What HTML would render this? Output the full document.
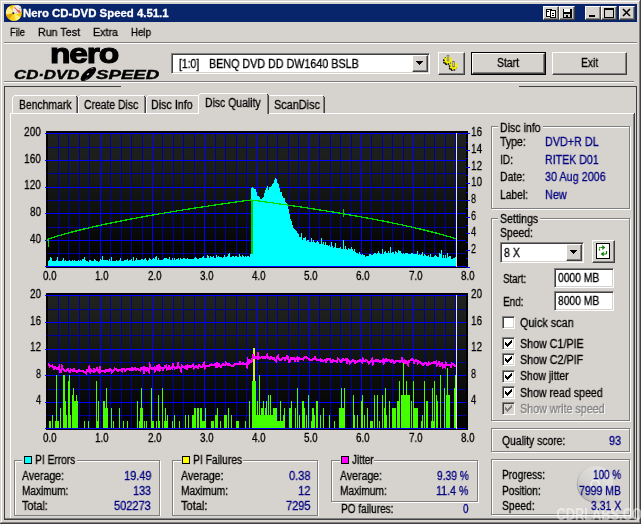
<!DOCTYPE html>
<html><head><meta charset="utf-8"><title>Nero CD-DVD Speed 4.51.1</title><style>
html,body{margin:0;padding:0;overflow:hidden}
body{width:641px;height:524px;background:#d6d3ce;position:relative;overflow:hidden;font-family:"Liberation Sans",sans-serif;font-size:12px;color:#000}
.a{position:absolute}
.t{position:absolute;white-space:pre;transform-origin:0 0;line-height:14px;will-change:transform;-webkit-text-stroke:0.3px}
.l{position:absolute;background:#808080}
.w{position:absolute;background:#fff}
.k{position:absolute;background:#404040}
.btn{position:absolute;background:#d6d3ce;box-sizing:border-box;border:1px solid;border-color:#fff #404040 #404040 #fff;box-shadow:inset -1px -1px 0 #808080}
.sunk{position:absolute;background:#fff;box-sizing:border-box;border:1px solid;border-color:#808080 #fff #fff #808080;box-shadow:inset 1px 1px 0 #404040, inset -1px -1px 0 #d6d3ce}
.grp{position:absolute;box-sizing:border-box;border:1px solid #808080;box-shadow:1px 1px 0 #fff, inset 1px 1px 0 #fff}
.cap{position:absolute;background:#d6d3ce}
.cb{position:absolute;width:13px;height:13px;background:#fff;box-sizing:border-box;border:1px solid;border-color:#808080 #fff #fff #808080;box-shadow:inset 1px 1px 0 #404040, inset -1px -1px 0 #d6d3ce}
.sq{position:absolute;width:8px;height:8px;box-sizing:border-box;border:1px solid #000}
</style></head><body>
<div class="w" style="left:1px;top:1px;width:638px;height:1px;"></div>
<div class="w" style="left:1px;top:1px;width:1px;height:521px;"></div>
<div class="l" style="left:639px;top:1px;width:1px;height:522px;"></div>
<div class="k" style="left:640px;top:0px;width:1px;height:524px;"></div>
<div class="l" style="left:1px;top:522px;width:639px;height:1px;"></div>
<div class="k" style="left:0px;top:523px;width:641px;height:1px;"></div>
<div class="a" style="left:4px;top:4px;width:633px;height:18px;background:#08246b"></div>
<svg class="a" style="left:5px;top:4px" width="18" height="18" viewBox="0 0 18 18">
<circle cx="8.9" cy="8.9" r="8" fill="#f8c800"/>
<path d="M8.9,8.9 L1,10.2 A8,8 0 0 1 4.2,2.4Z" fill="#fff08a"/>
<path d="M8.9,8.9 L15.6,13.2 A8,8 0 0 1 10.5,16.7Z" fill="#fff27a"/>
<path d="M8.9,8.9 L4.6,15.6 A8,8 0 0 1 1.3,11.2Z" fill="#e8a400"/>
<path d="M8.9,8.9 L10.5,16.7 A8,8 0 0 1 4.6,15.6Z" fill="#ffd21c"/>
<circle cx="8.4" cy="9.1" r="1.1" fill="#08246b"/>
<circle cx="12.1" cy="5.4" r="4.5" fill="#ececec"/>
<path d="M9,3.2 L11,4.6 L15.6,9.2 L13.4,8.6 Z" fill="#e83010"/>
<path d="M12.5,6.2 L16,9 L14.5,6.2Z" fill="#f04020"/>
<circle cx="9.9" cy="3.6" r="0.6" fill="#f06040"/><circle cx="14.9" cy="4.6" r="0.6" fill="#f06040"/><circle cx="11.5" cy="8.4" r="0.5" fill="#f0a090"/>
</svg>
<div class="btn" style="left:543px;top:6px;width:16px;height:14px"><svg class="a" style="left:0;top:0" width="14" height="12" viewBox="0 0 14 12" shape-rendering="crispEdges"><rect x="2" y="2" width="5" height="7" fill="#fff" stroke="#000"/><rect x="6.5" y="3.5" width="5" height="7" fill="#fff" stroke="#000"/><rect x="3" y="4" width="2" height="1" fill="#000"/><rect x="8" y="6" width="2" height="1" fill="#000"/><rect x="8" y="8" width="2" height="1" fill="#000"/></svg></div>
<div class="btn" style="left:559px;top:6px;width:16px;height:14px"><svg class="a" style="left:0;top:0" width="14" height="12" viewBox="0 0 14 12" shape-rendering="crispEdges"><rect x="2.5" y="1.5" width="9" height="9" fill="#000"/><rect x="4" y="2" width="6" height="3" fill="#fff"/><rect x="4" y="7" width="6" height="3" fill="#d6d3ce"/><rect x="6" y="8" width="2" height="2" fill="#000"/></svg></div>
<div class="btn" style="left:585px;top:6px;width:16px;height:14px"><svg class="a" style="left:0;top:0" width="14" height="12" viewBox="0 0 14 12" shape-rendering="crispEdges"><rect x="3" y="8" width="6" height="2" fill="#000"/></svg></div>
<div class="btn" style="left:601px;top:6px;width:16px;height:14px"><svg class="a" style="left:0;top:0" width="14" height="12" viewBox="0 0 14 12" shape-rendering="crispEdges"><rect x="2" y="1" width="9" height="9" fill="none" stroke="#000" stroke-width="1" transform="translate(0.5,0.5)"/><rect x="2" y="1" width="10" height="2" fill="#000"/></svg></div>
<div class="btn" style="left:619px;top:6px;width:16px;height:14px"><svg class="a" style="left:0;top:0" width="14" height="12" viewBox="0 0 14 12" shape-rendering="crispEdges"><path d="M3,2 L10,9 M10,2 L3,9" stroke="#000" stroke-width="1.6" shape-rendering="auto"/></svg></div>
<div class="l" style="left:4px;top:42px;width:633px;height:1px;"></div>
<div class="w" style="left:4px;top:43px;width:633px;height:1px;"></div>
<div class="a" id="nero" style="left:50px;top:38px;font-weight:bold;font-size:28px;line-height:32px;letter-spacing:-1px;-webkit-text-stroke:1.1px #000;white-space:pre;transform-origin:0 0;will-change:transform;transform:scaleX(1.2)">nero</div>
<div class="a" id="cddvd" style="left:14px;top:68px;font-weight:bold;font-style:italic;font-size:12px;line-height:14px;white-space:pre;-webkit-text-stroke:0.4px #000;transform-origin:0 0;will-change:transform;transform:scaleX(1.4)">CD·DVD</div>
<div class="a" id="speed" style="left:96.2px;top:68px;font-weight:bold;font-style:italic;font-size:12px;line-height:14px;white-space:pre;-webkit-text-stroke:0.4px #000;transform-origin:0 0;will-change:transform;transform:scaleX(1.555)">SPEED</div>
<svg class="a" style="left:78px;top:64px" width="22" height="20" viewBox="0 0 22 20"><g transform="translate(10.4,10.1) rotate(-41)"><ellipse rx="9.6" ry="4.1" fill="#000"/><ellipse cx="-0.3" cy="-0.2" rx="1.5" ry="0.7" fill="#d6d3ce"/><path d="M5.2,-2.2 Q6.6,-2 7.6,-1" stroke="#d6d3ce" stroke-width="0.5" fill="none"/><path d="M-7,2 Q-5,2.6 -3,2.4" stroke="#d6d3ce" stroke-width="0.4" fill="none"/></g></svg>
<div class="sunk" style="left:171px;top:53px;width:259px;height:21px;"></div>
<div class="btn" style="left:412px;top:55px;width:16px;height:17px"><svg class="a" style="left:3px;top:5px" width="8" height="5" shape-rendering="crispEdges"><path d="M0,0H7L3.5,4Z" fill="#000"/><rect x="0" y="0" width="7" height="1"/><rect x="1" y="1" width="5" height="1"/><rect x="2" y="2" width="3" height="1"/><rect x="3" y="3" width="1" height="1"/></svg></div>
<div class="btn" style="left:438px;top:52px;width:27px;height:23px;"></div>
<svg class="a" style="left:440px;top:53px" width="24" height="21" viewBox="0 0 24 21">
<g transform="translate(8,7)"><circle r="3.3" fill="#000" transform="translate(-1,1.1)" stroke="#000" stroke-width="1.6" stroke-dasharray="1.5 1.09"/><circle r="3.3" fill="#f8f000" stroke="#f8f000" stroke-width="1.6" stroke-dasharray="1.5 1.09"/><rect x="-0.9" y="-4.6" width="1.8" height="5.6" fill="#c8c8d8" stroke="#505060" stroke-width="0.5"/></g>
<g transform="translate(13.7,12.9)"><circle r="3.3" fill="#000" transform="translate(-1,1.1)" stroke="#000" stroke-width="1.6" stroke-dasharray="1.5 1.09"/><circle r="3.3" fill="#f8f000" stroke="#f8f000" stroke-width="1.6" stroke-dasharray="1.5 1.09"/><rect x="-0.9" y="-4.6" width="1.8" height="5.6" fill="#c8c8d8" stroke="#505060" stroke-width="0.5"/></g>
</svg>
<div class="a" style="left:471px;top:52px;width:75px;height:23px;background:#000"></div>
<div class="btn" style="left:472px;top:53px;width:73px;height:21px;"></div>
<div class="btn" style="left:552px;top:52px;width:75px;height:23px;"></div>
<div class="l" style="left:4px;top:81px;width:630px;height:1px;"></div>
<div class="w" style="left:4px;top:82px;width:630px;height:1px;"></div>
<div class="k" style="left:4px;top:86px;width:117px;height:1px;"></div>
<div class="k" style="left:519px;top:86px;width:118px;height:1px;"></div>
<div class="k" style="left:4px;top:86px;width:1px;height:434px;"></div>
<div class="k" style="left:636px;top:86px;width:1px;height:434px;"></div>
<div class="w" style="left:10px;top:113px;width:624px;height:1px;"></div>
<div class="w" style="left:10px;top:113px;width:1px;height:406px;"></div>
<div class="l" style="left:633px;top:114px;width:1px;height:405px;"></div>
<div class="k" style="left:634px;top:113px;width:1px;height:407px;"></div>
<div class="l" style="left:5px;top:518px;width:631px;height:1px;"></div>
<div class="k" style="left:4px;top:519px;width:633px;height:1px;"></div>
<div class="a" style="left:12px;top:95px;width:66px;height:18px;background:#d6d3ce"></div><div class="w" style="left:12px;top:97px;width:1px;height:16px;"></div><div class="w" style="left:14px;top:95px;width:62px;height:1px;"></div><div class="w" style="left:13px;top:96px;width:1px;height:1px;"></div><div class="l" style="left:76px;top:97px;width:1px;height:16px;"></div><div class="k" style="left:77px;top:97px;width:1px;height:16px;"></div><div class="k" style="left:76px;top:96px;width:1px;height:1px;"></div>
<div class="a" style="left:78px;top:95px;width:68px;height:18px;background:#d6d3ce"></div><div class="w" style="left:78px;top:97px;width:1px;height:16px;"></div><div class="w" style="left:80px;top:95px;width:64px;height:1px;"></div><div class="w" style="left:79px;top:96px;width:1px;height:1px;"></div><div class="l" style="left:144px;top:97px;width:1px;height:16px;"></div><div class="k" style="left:145px;top:97px;width:1px;height:16px;"></div><div class="k" style="left:144px;top:96px;width:1px;height:1px;"></div>
<div class="a" style="left:146px;top:95px;width:54px;height:18px;background:#d6d3ce"></div><div class="w" style="left:146px;top:97px;width:1px;height:16px;"></div><div class="w" style="left:148px;top:95px;width:50px;height:1px;"></div><div class="w" style="left:147px;top:96px;width:1px;height:1px;"></div><div class="l" style="left:198px;top:97px;width:1px;height:16px;"></div><div class="k" style="left:199px;top:97px;width:1px;height:16px;"></div><div class="k" style="left:198px;top:96px;width:1px;height:1px;"></div>
<div class="a" style="left:267px;top:95px;width:58px;height:18px;background:#d6d3ce"></div><div class="w" style="left:267px;top:97px;width:1px;height:16px;"></div><div class="w" style="left:269px;top:95px;width:54px;height:1px;"></div><div class="w" style="left:268px;top:96px;width:1px;height:1px;"></div><div class="l" style="left:323px;top:97px;width:1px;height:16px;"></div><div class="k" style="left:324px;top:97px;width:1px;height:16px;"></div><div class="k" style="left:323px;top:96px;width:1px;height:1px;"></div>
<div class="a" style="left:198px;top:93px;width:71px;height:21px;background:#d6d3ce"></div><div class="w" style="left:198px;top:95px;width:1px;height:19px;"></div><div class="w" style="left:200px;top:93px;width:67px;height:1px;"></div><div class="w" style="left:199px;top:94px;width:1px;height:1px;"></div><div class="l" style="left:267px;top:95px;width:1px;height:19px;"></div><div class="k" style="left:268px;top:95px;width:1px;height:19px;"></div><div class="k" style="left:267px;top:94px;width:1px;height:1px;"></div>
<div class="grp" style="left:491px;top:126px;width:139px;height:83px"></div><div class="cap" style="left:498px;top:126px;width:45px;height:2px;"></div>
<div class="grp" style="left:491px;top:218px;width:139px;height:203px"></div><div class="cap" style="left:498px;top:218px;width:42px;height:2px;"></div>
<div class="grp" style="left:491px;top:428px;width:139px;height:24px"></div>
<div class="grp" style="left:491px;top:459px;width:139px;height:56px"></div>
<div class="grp" style="left:14px;top:460px;width:146px;height:56px"></div><div class="cap" style="left:22px;top:460px;width:55px;height:2px;"></div>
<div class="cap" style="left:14px;top:516px;width:147px;height:1px;"></div>
<div class="grp" style="left:172px;top:460px;width:146px;height:56px"></div><div class="cap" style="left:181px;top:460px;width:62px;height:2px;"></div>
<div class="cap" style="left:172px;top:516px;width:147px;height:1px;"></div>
<div class="grp" style="left:331px;top:460px;width:147px;height:42px"></div><div class="cap" style="left:340px;top:460px;width:34px;height:2px;"></div>
<div class="sq" style="left:24px;top:456px;background:#00ffff"></div>
<div class="sq" style="left:182px;top:456px;background:#ffff00"></div>
<div class="sq" style="left:341px;top:456px;background:#ff00ff"></div>
<div class="sunk" style="left:500px;top:242px;width:84px;height:21px;"></div>
<div class="btn" style="left:566px;top:244px;width:16px;height:17px"><svg class="a" style="left:3px;top:5px" width="8" height="5" shape-rendering="crispEdges"><rect x="0" y="0" width="7" height="1"/><rect x="1" y="1" width="5" height="1"/><rect x="2" y="2" width="3" height="1"/><rect x="3" y="3" width="1" height="1"/></svg></div>
<div class="btn" style="left:592px;top:240px;width:23px;height:23px;"></div>
<svg class="a" style="left:596px;top:243px" width="14" height="16" viewBox="0 0 14 16"><rect x="0.5" y="0.5" width="13" height="15" fill="#fff" stroke="#000"/>
<path d="M3.5,7.5 V5.2 Q3.5,4.5 4.2,4.5 H7" stroke="#008000" stroke-width="1.2" fill="none" stroke-dasharray="1.6 0.5"/><path d="M6.3,2 L9.3,4.5 L6.3,7Z" fill="#008000"/>
<path d="M10.5,8 V10.3 Q10.5,11 9.8,11 H7" stroke="#008000" stroke-width="1.2" fill="none"/><path d="M7.7,8.5 L4.7,11 L7.7,13.5Z" fill="#008000"/></svg>
<div class="sunk" style="left:554px;top:268px;width:60px;height:20px;"></div>
<div class="sunk" style="left:554px;top:291px;width:60px;height:20px;"></div>
<div class="cb" style="left:502px;top:316px;"></div>
<div class="cb" style="left:502px;top:337px;"><svg class="a" style="left:2px;top:2px" width="7" height="7" shape-rendering="crispEdges"><path d="M0,2v3l2,2l5,-5v-3l-5,5z" fill="#000"/></svg></div>
<div class="cb" style="left:502px;top:353px;"><svg class="a" style="left:2px;top:2px" width="7" height="7" shape-rendering="crispEdges"><path d="M0,2v3l2,2l5,-5v-3l-5,5z" fill="#000"/></svg></div>
<div class="cb" style="left:502px;top:370px;"><svg class="a" style="left:2px;top:2px" width="7" height="7" shape-rendering="crispEdges"><path d="M0,2v3l2,2l5,-5v-3l-5,5z" fill="#000"/></svg></div>
<div class="cb" style="left:502px;top:386px;"><svg class="a" style="left:2px;top:2px" width="7" height="7" shape-rendering="crispEdges"><path d="M0,2v3l2,2l5,-5v-3l-5,5z" fill="#000"/></svg></div>
<div class="cb" style="left:502px;top:402px;background:#d6d3ce;"><svg class="a" style="left:2px;top:2px" width="7" height="7" shape-rendering="crispEdges"><path d="M0,2v3l2,2l5,-5v-3l-5,5z" fill="#808080"/></svg></div>
<svg class="a" style="left:551px;top:454px" width="90" height="70" viewBox="0 0 90 70"><defs><linearGradient id="wm" x1="0.1" y1="0.9" x2="0.9" y2="0.1"><stop offset="0" stop-color="#8c8c8c" stop-opacity="0.5"/><stop offset="0.35" stop-color="#d0d0d0" stop-opacity="0.4"/><stop offset="1" stop-color="#fff" stop-opacity="0.45"/></linearGradient></defs>
<linearGradient id="wr" x1="0.1" y1="0.9" x2="0.9" y2="0.1"><stop offset="0" stop-color="#808080" stop-opacity="0.7"/><stop offset="0.6" stop-color="#b0b0b0" stop-opacity="0.25"/><stop offset="1" stop-color="#fff" stop-opacity="0.3"/></linearGradient><circle cx="44.2" cy="30.2" r="18" fill="url(#wm)" stroke="url(#wr)" stroke-width="1"/><circle cx="44.2" cy="30.2" r="4" fill="none" stroke="#fff" stroke-opacity="0.6" stroke-width="1.6"/>
<text x="5.5" y="66" font-family="Liberation Sans, sans-serif" font-weight="bold" font-size="16.5" fill="#fff" fill-opacity="0.5" textLength="96" lengthAdjust="spacingAndGlyphs">CDRLABS.COM</text></svg>
<svg class="a" style="left:0;top:0" width="641" height="524" viewBox="0 0 641 524" shape-rendering="crispEdges"><rect x="46" y="131" width="422" height="137" fill="#000"/><defs><linearGradient id="g131" x1="0" y1="0" x2="0" y2="1"><stop offset="0" stop-color="#1f221f"/><stop offset="0.3" stop-color="#191c19"/><stop offset="0.6" stop-color="#0d0f0d"/><stop offset="1" stop-color="#000"/></linearGradient></defs><rect x="48" y="133" width="418" height="133" fill="url(#g131)"/><rect x="58" y="133" width="1" height="134" fill="#00009c"/><rect x="68" y="133" width="1" height="134" fill="#00009c"/><rect x="79" y="133" width="1" height="134" fill="#00009c"/><rect x="89" y="133" width="1" height="134" fill="#00009c"/><rect x="110" y="133" width="1" height="134" fill="#00009c"/><rect x="121" y="133" width="1" height="134" fill="#00009c"/><rect x="131" y="133" width="1" height="134" fill="#00009c"/><rect x="142" y="133" width="1" height="134" fill="#00009c"/><rect x="162" y="133" width="1" height="134" fill="#00009c"/><rect x="173" y="133" width="1" height="134" fill="#00009c"/><rect x="183" y="133" width="1" height="134" fill="#00009c"/><rect x="194" y="133" width="1" height="134" fill="#00009c"/><rect x="215" y="133" width="1" height="134" fill="#00009c"/><rect x="225" y="133" width="1" height="134" fill="#00009c"/><rect x="236" y="133" width="1" height="134" fill="#00009c"/><rect x="246" y="133" width="1" height="134" fill="#00009c"/><rect x="267" y="133" width="1" height="134" fill="#00009c"/><rect x="277" y="133" width="1" height="134" fill="#00009c"/><rect x="288" y="133" width="1" height="134" fill="#00009c"/><rect x="298" y="133" width="1" height="134" fill="#00009c"/><rect x="319" y="133" width="1" height="134" fill="#00009c"/><rect x="330" y="133" width="1" height="134" fill="#00009c"/><rect x="340" y="133" width="1" height="134" fill="#00009c"/><rect x="351" y="133" width="1" height="134" fill="#00009c"/><rect x="371" y="133" width="1" height="134" fill="#00009c"/><rect x="382" y="133" width="1" height="134" fill="#00009c"/><rect x="392" y="133" width="1" height="134" fill="#00009c"/><rect x="403" y="133" width="1" height="134" fill="#00009c"/><rect x="424" y="133" width="1" height="134" fill="#00009c"/><rect x="434" y="133" width="1" height="134" fill="#00009c"/><rect x="445" y="133" width="1" height="134" fill="#00009c"/><rect x="455" y="133" width="1" height="134" fill="#00009c"/><rect x="47" y="147" width="419" height="1" fill="#00009c"/><rect x="47" y="173" width="419" height="1" fill="#00009c"/><rect x="47" y="200" width="419" height="1" fill="#00009c"/><rect x="47" y="227" width="419" height="1" fill="#00009c"/><rect x="47" y="253" width="419" height="1" fill="#00009c"/><rect x="100" y="133" width="1" height="134" fill="#0000ff"/><rect x="152" y="133" width="1" height="134" fill="#0000ff"/><rect x="204" y="133" width="1" height="134" fill="#0000ff"/><rect x="257" y="133" width="1" height="134" fill="#0000ff"/><rect x="309" y="133" width="1" height="134" fill="#0000ff"/><rect x="361" y="133" width="1" height="134" fill="#0000ff"/><rect x="413" y="133" width="1" height="134" fill="#0000ff"/><rect x="45" y="133" width="421" height="1" fill="#0000ff"/><rect x="45" y="160" width="421" height="1" fill="#0000ff"/><rect x="45" y="187" width="421" height="1" fill="#0000ff"/><rect x="45" y="213" width="421" height="1" fill="#0000ff"/><rect x="45" y="240" width="421" height="1" fill="#0000ff"/><rect x="45" y="266" width="421" height="1" fill="#0000ff"/><rect x="466" y="133" width="4" height="1" fill="#0000ff"/><rect x="466" y="142" width="2" height="1" fill="#0000ff"/><rect x="466" y="150" width="4" height="1" fill="#0000ff"/><rect x="466" y="158" width="2" height="1" fill="#0000ff"/><rect x="466" y="167" width="4" height="1" fill="#0000ff"/><rect x="466" y="175" width="2" height="1" fill="#0000ff"/><rect x="466" y="183" width="4" height="1" fill="#0000ff"/><rect x="466" y="192" width="2" height="1" fill="#0000ff"/><rect x="466" y="200" width="4" height="1" fill="#0000ff"/><rect x="466" y="208" width="2" height="1" fill="#0000ff"/><rect x="466" y="217" width="4" height="1" fill="#0000ff"/><rect x="466" y="225" width="2" height="1" fill="#0000ff"/><rect x="466" y="233" width="4" height="1" fill="#0000ff"/><rect x="466" y="242" width="2" height="1" fill="#0000ff"/><rect x="466" y="250" width="4" height="1" fill="#0000ff"/><rect x="466" y="258" width="2" height="1" fill="#0000ff"/><rect x="466" y="267" width="4" height="1" fill="#0000ff"/><path d="M48,266L48,260.7L49,260.7L49,260.4L50,260.4L50,257.0L51,257.0L51,258.0L52,258.0L52,260.7L53,260.7L53,261.0L54,261.0L54,260.6L55,260.6L55,260.7L56,260.7L56,260.3L57,260.3L57,257.1L58,257.1L58,261.3L59,261.3L59,260.8L60,260.8L60,261.2L61,261.2L61,260.8L62,260.8L62,260.4L63,260.4L63,258.0L64,258.0L64,261.0L65,261.0L65,260.4L66,260.4L66,260.5L67,260.5L67,261.2L68,261.2L68,261.4L69,261.4L69,259.9L70,259.9L70,261.4L71,261.4L71,260.5L72,260.5L72,259.7L73,259.7L73,260.5L74,260.5L74,259.8L75,259.8L75,261.1L76,261.1L76,260.8L77,260.8L77,260.8L78,260.8L78,260.3L79,260.3L79,260.9L80,260.9L80,259.8L81,259.8L81,261.2L82,261.2L82,259.2L83,259.2L83,258.5L84,258.5L84,257.2L85,257.2L85,260.3L86,260.3L86,261.2L87,261.2L87,261.2L88,261.2L88,261.5L89,261.5L89,260.3L90,260.3L90,260.1L91,260.1L91,261.0L92,261.0L92,260.9L93,260.9L93,260.8L94,260.8L94,259.2L95,259.2L95,259.5L96,259.5L96,261.4L97,261.4L97,260.6L98,260.6L98,261.5L99,261.5L99,261.4L100,261.4L100,258.8L101,258.8L101,260.3L102,260.3L102,256.3L103,256.3L103,260.2L104,260.2L104,259.9L105,259.9L105,259.9L106,259.9L106,260.0L107,260.0L107,260.3L108,260.3L108,261.2L109,261.2L109,258.6L110,258.6L110,261.0L111,261.0L111,257.1L112,257.1L112,260.7L113,260.7L113,260.8L114,260.8L114,260.8L115,260.8L115,260.7L116,260.7L116,259.8L117,259.8L117,260.9L118,260.9L118,260.6L119,260.6L119,260.3L120,260.3L120,258.2L121,258.2L121,260.7L122,260.7L122,260.8L123,260.8L123,261.0L124,261.0L124,259.8L125,259.8L125,259.6L126,259.6L126,260.0L127,260.0L127,259.2L128,259.2L128,260.5L129,260.5L129,260.2L130,260.2L130,259.6L131,259.6L131,259.1L132,259.1L132,260.6L133,260.6L133,257.4L134,257.4L134,260.6L135,260.6L135,259.9L136,259.9L136,258.1L137,258.1L137,259.8L138,259.8L138,260.2L139,260.2L139,260.1L140,260.1L140,260.2L141,260.2L141,259.1L142,259.1L142,258.9L143,258.9L143,260.4L144,260.4L144,259.2L145,259.2L145,258.4L146,258.4L146,259.8L147,259.8L147,260.5L148,260.5L148,259.5L149,259.5L149,257.5L150,257.5L150,258.7L151,258.7L151,259.8L152,259.8L152,258.9L153,258.9L153,258.3L154,258.3L154,258.8L155,258.8L155,257.4L156,257.4L156,255.8L157,255.8L157,260.1L158,260.1L158,257.5L159,257.5L159,259.8L160,259.8L160,259.9L161,259.9L161,259.5L162,259.5L162,260.1L163,260.1L163,258.6L164,258.6L164,258.3L165,258.3L165,258.2L166,258.2L166,257.8L167,257.8L167,258.7L168,258.7L168,258.5L169,258.5L169,257.1L170,257.1L170,259.9L171,259.9L171,259.8L172,259.8L172,258.0L173,258.0L173,259.6L174,259.6L174,258.3L175,258.3L175,259.7L176,259.7L176,259.0L177,259.0L177,259.4L178,259.4L178,258.2L179,258.2L179,259.7L180,259.7L180,258.2L181,258.2L181,259.1L182,259.1L182,259.1L183,259.1L183,258.3L184,258.3L184,257.8L185,257.8L185,258.8L186,258.8L186,259.3L187,259.3L187,257.9L188,257.9L188,258.9L189,258.9L189,258.8L190,258.8L190,259.2L191,259.2L191,258.7L192,258.7L192,258.6L193,258.6L193,258.7L194,258.7L194,257.5L195,257.5L195,257.1L196,257.1L196,257.8L197,257.8L197,258.6L198,258.6L198,258.5L199,258.5L199,258.2L200,258.2L200,258.4L201,258.4L201,258.1L202,258.1L202,257.2L203,257.2L203,255.8L204,255.8L204,257.6L205,257.6L205,257.5L206,257.5L206,257.7L207,257.7L207,255.3L208,255.3L208,256.4L209,256.4L209,257.8L210,257.8L210,255.9L211,255.9L211,257.0L212,257.0L212,256.6L213,256.6L213,255.9L214,255.9L214,257.7L215,257.7L215,257.8L216,257.8L216,255.4L217,255.4L217,256.7L218,256.7L218,255.8L219,255.8L219,256.6L220,256.6L220,256.7L221,256.7L221,257.4L222,257.4L222,257.6L223,257.6L223,257.0L224,257.0L224,254.6L225,254.6L225,257.1L226,257.1L226,256.8L227,256.8L227,255.5L228,255.5L228,254.4L229,254.4L229,252.9L230,252.9L230,256.6L231,256.6L231,257.1L232,257.1L232,255.6L233,255.6L233,255.9L234,255.9L234,256.7L235,256.7L235,256.3L236,256.3L236,256.2L237,256.2L237,257.2L238,257.2L238,256.5L239,256.5L239,254.1L240,254.1L240,255.5L241,255.5L241,256.5L242,256.5L242,255.3L243,255.3L243,256.1L244,256.1L244,257.1L245,257.1L245,256.4L246,256.4L246,256.6L247,256.6L247,256.2L248,256.2L248,255.8L249,255.8L249,257.0L250,257.0L250,254.1L251,254.1L251,187.7L252,187.7L252,186.7L253,186.7L253,187.7L254,187.7L254,189.0L255,189.0L255,189.3L256,189.3L256,192.3L257,192.3L257,196.0L258,196.0L258,195.7L259,195.7L259,197.2L260,197.2L260,198.7L261,198.7L261,198.6L262,198.6L262,198.0L263,198.0L263,197.0L264,197.0L264,192.9L265,192.9L265,190.1L266,190.1L266,188.3L267,188.3L267,186.1L268,186.1L268,190.3L269,190.3L269,186.5L270,186.5L270,187.0L271,187.0L271,185.6L272,185.6L272,184.2L273,184.2L273,182.5L274,182.5L274,179.9L275,179.9L275,177.9L276,177.9L276,179.3L277,179.3L277,183.2L278,183.2L278,184.4L279,184.4L279,187.7L280,187.7L280,191.7L281,191.7L281,191.6L282,191.6L282,195.5L283,195.5L283,197.6L284,197.6L284,197.8L285,197.8L285,202.3L286,202.3L286,203.1L287,203.1L287,205.4L288,205.4L288,209.3L289,209.3L289,214.4L290,214.4L290,219.1L291,219.1L291,220.6L292,220.6L292,225.3L293,225.3L293,227.6L294,227.6L294,228.7L295,228.7L295,230.3L296,230.3L296,230.7L297,230.7L297,232.8L298,232.8L298,234.0L299,234.0L299,236.7L300,236.7L300,237.3L301,237.3L301,233.3L302,233.3L302,239.8L303,239.8L303,238.3L304,238.3L304,238.2L305,238.2L305,237.1L306,237.1L306,241.1L307,241.1L307,240.3L308,240.3L308,240.0L309,240.0L309,241.7L310,241.7L310,241.8L311,241.8L311,237.5L312,237.5L312,242.3L313,242.3L313,239.9L314,239.9L314,242.1L315,242.1L315,242.8L316,242.8L316,242.1L317,242.1L317,241.3L318,241.3L318,242.3L319,242.3L319,244.1L320,244.1L320,243.6L321,243.6L321,237.6L322,237.6L322,243.6L323,243.6L323,241.8L324,241.8L324,244.8L325,244.8L325,242.3L326,242.3L326,245.0L327,245.0L327,244.9L328,244.9L328,245.8L329,245.8L329,245.1L330,245.1L330,246.6L331,246.6L331,241.8L332,241.8L332,245.7L333,245.7L333,247.5L334,247.5L334,247.0L335,247.0L335,242.6L336,242.6L336,247.8L337,247.8L337,247.7L338,247.7L338,247.5L339,247.5L339,248.0L340,248.0L340,246.9L341,246.9L341,249.2L342,249.2L342,249.3L343,249.3L343,249.1L344,249.1L344,249.0L345,249.0L345,246.3L346,246.3L346,249.2L347,249.2L347,250.3L348,250.3L348,248.4L349,248.4L349,248.9L350,248.9L350,249.1L351,249.1L351,246.5L352,246.5L352,249.3L353,249.3L353,251.4L354,251.4L354,249.1L355,249.1L355,251.9L356,251.9L356,252.7L357,252.7L357,252.7L358,252.7L358,254.1L359,254.1L359,252.3L360,252.3L360,254.2L361,254.2L361,254.7L362,254.7L362,254.1L363,254.1L363,255.0L364,255.0L364,254.6L365,254.6L365,256.6L366,256.6L366,255.8L367,255.8L367,255.9L368,255.9L368,256.2L369,256.2L369,253.9L370,253.9L370,254.3L371,254.3L371,254.5L372,254.5L372,254.7L373,254.7L373,254.4L374,254.4L374,253.4L375,253.4L375,253.3L376,253.3L376,254.2L377,254.2L377,253.1L378,253.1L378,250.5L379,250.5L379,252.8L380,252.8L380,253.6L381,253.6L381,253.9L382,253.9L382,248.6L383,248.6L383,253.5L384,253.5L384,252.4L385,252.4L385,251.0L386,251.0L386,253.0L387,253.0L387,253.1L388,253.1L388,251.2L389,251.2L389,252.6L390,252.6L390,247.2L391,247.2L391,253.0L392,253.0L392,251.5L393,251.5L393,252.4L394,252.4L394,253.5L395,253.5L395,251.2L396,251.2L396,251.7L397,251.7L397,252.7L398,252.7L398,250.2L399,250.2L399,251.4L400,251.4L400,251.3L401,251.3L401,253.0L402,253.0L402,253.5L403,253.5L403,252.5L404,252.5L404,253.6L405,253.6L405,253.4L406,253.4L406,252.7L407,252.7L407,253.3L408,253.3L408,253.8L409,253.8L409,253.5L410,253.5L410,253.6L411,253.6L411,253.2L412,253.2L412,253.2L413,253.2L413,254.4L414,254.4L414,254.1L415,254.1L415,253.7L416,253.7L416,253.8L417,253.8L417,251.3L418,251.3L418,254.9L419,254.9L419,253.7L420,253.7L420,254.5L421,254.5L421,254.4L422,254.4L422,252.4L423,252.4L423,255.7L424,255.7L424,254.4L425,254.4L425,254.8L426,254.8L426,256.2L427,256.2L427,256.0L428,256.0L428,254.8L429,254.8L429,256.8L430,256.8L430,254.2L431,254.2L431,256.7L432,256.7L432,256.7L433,256.7L433,257.3L434,257.3L434,255.7L435,255.7L435,255.2L436,255.2L436,255.8L437,255.8L437,256.9L438,256.9L438,257.0L439,257.0L439,252.8L440,252.8L440,254.4L441,254.4L441,250.4L442,250.4L442,257.8L443,257.8L443,255.4L444,255.4L444,257.7L445,257.7L445,254.5L446,254.5L446,258.4L447,258.4L447,253.3L448,253.3L448,257.1L449,257.1L449,255.5L450,255.5L450,255.5L451,255.5L451,258.8L452,258.8L452,259.3L453,259.3L453,257.6L454,257.6L454,258.0L455,258.0L455,256.5L456,256.5L456,258.7L457,258.7L457,266Z" fill="#00ffff" shape-rendering="crispEdges"/><rect x="343" y="240" width="1" height="10" fill="#00ffff"/><path d="M48.5,247 L48,239.1 L50,238.4 L52,237.8 L54,237.1 L56,236.5 L58,235.9 L60,235.3 L62,234.8 L64,234.2 L66,233.7 L68,233.1 L70,232.6 L72,232.0 L74,231.5 L76,231.0 L78,230.5 L80,230.0 L82,229.5 L84,229.0 L86,228.5 L88,228.1 L90,227.6 L92,227.1 L94,226.7 L96,226.2 L98,225.8 L100,225.3 L102,224.9 L104,224.5 L106,224.0 L108,223.6 L110,223.2 L112,222.8 L114,222.4 L116,222.0 L118,221.6 L120,221.2 L122,220.8 L124,220.4 L126,220.0 L128,219.6 L130,219.2 L132,218.8 L134,218.4 L136,218.1 L138,217.7 L140,217.3 L142,217.0 L144,216.6 L146,216.2 L148,215.9 L150,215.5 L152,215.2 L154,214.8 L156,214.5 L158,214.1 L160,213.8 L162,213.4 L164,213.1 L166,212.8 L168,212.4 L170,212.1 L172,211.8 L174,211.4 L176,211.1 L178,210.8 L180,210.4 L182,210.1 L184,209.8 L186,209.5 L188,209.2 L190,208.9 L192,208.5 L194,208.2 L196,207.9 L198,207.6 L200,207.3 L202,207.0 L204,206.7 L206,206.4 L208,206.1 L210,205.8 L212,205.5 L214,205.2 L216,204.9 L218,204.6 L220,204.3 L222,204.0 L224,203.7 L226,203.5 L228,203.2 L230,202.9 L232,202.6 L234,202.3 L236,202.0 L238,201.8 L240,201.5 L242,201.2 L244,200.9 L246,200.7 L248,200.4 L250,200.1 L252,200.1 L254,200.4 L256,200.6 L258,200.9 L260,201.2 L262,201.4 L264,201.7 L266,202.0 L268,202.3 L270,202.6 L272,202.8 L274,203.1 L276,203.4 L278,203.7 L280,204.0 L282,204.3 L284,204.5 L286,204.8 L288,205.1 L290,205.4 L292,205.7 L294,206.0 L296,206.3 L298,206.6 L300,206.9 L302,207.2 L304,207.5 L306,207.8 L308,208.1 L310,208.4 L312,208.7 L314,209.0 L316,209.4 L318,209.7 L320,210.0 L322,210.3 L324,210.6 L326,210.9 L328,211.3 L330,211.6 L332,211.9 L334,212.2 L336,212.6 L338,212.9 L340,213.2 L342,213.6 L344,213.9 L346,214.3 L348,214.6 L350,215.0 L352,215.3 L354,215.6 L356,216.0 L358,216.4 L360,216.7 L362,217.1 L364,217.4 L366,217.8 L368,218.2 L370,218.5 L372,218.9 L374,219.3 L376,219.7 L378,220.1 L380,220.4 L382,220.8 L384,221.2 L386,221.6 L388,222.0 L390,222.4 L392,222.8 L394,223.3 L396,223.7 L398,224.1 L400,224.5 L402,224.9 L404,225.4 L406,225.8 L408,226.3 L410,226.7 L412,227.2 L414,227.6 L416,228.1 L418,228.5 L420,229.0 L422,229.5 L424,230.0 L426,230.5 L428,231.0 L430,231.5 L432,232.0 L434,232.5 L436,233.0 L438,233.6 L440,234.1 L442,234.7 L444,235.3 L446,235.8 L448,236.4 L450,237.0 L452,237.6 L454,238.3 L456,238.9 L456,238.9" fill="none" stroke="#00dc00" stroke-width="1.25"/><rect x="251" y="200" width="1.6" height="54" fill="#00d000"/><rect x="343" y="209" width="1" height="8" fill="#00d000"/><rect x="456" y="133" width="1" height="134" fill="#e4e4f4"/><rect x="46" y="293" width="422" height="137" fill="#000"/><defs><linearGradient id="g293" x1="0" y1="0" x2="0" y2="1"><stop offset="0" stop-color="#1f221f"/><stop offset="0.3" stop-color="#191c19"/><stop offset="0.6" stop-color="#0d0f0d"/><stop offset="1" stop-color="#000"/></linearGradient></defs><rect x="48" y="295" width="418" height="133" fill="url(#g293)"/><rect x="58" y="295" width="1" height="134" fill="#00009c"/><rect x="68" y="295" width="1" height="134" fill="#00009c"/><rect x="79" y="295" width="1" height="134" fill="#00009c"/><rect x="89" y="295" width="1" height="134" fill="#00009c"/><rect x="110" y="295" width="1" height="134" fill="#00009c"/><rect x="121" y="295" width="1" height="134" fill="#00009c"/><rect x="131" y="295" width="1" height="134" fill="#00009c"/><rect x="142" y="295" width="1" height="134" fill="#00009c"/><rect x="162" y="295" width="1" height="134" fill="#00009c"/><rect x="173" y="295" width="1" height="134" fill="#00009c"/><rect x="183" y="295" width="1" height="134" fill="#00009c"/><rect x="194" y="295" width="1" height="134" fill="#00009c"/><rect x="215" y="295" width="1" height="134" fill="#00009c"/><rect x="225" y="295" width="1" height="134" fill="#00009c"/><rect x="236" y="295" width="1" height="134" fill="#00009c"/><rect x="246" y="295" width="1" height="134" fill="#00009c"/><rect x="267" y="295" width="1" height="134" fill="#00009c"/><rect x="277" y="295" width="1" height="134" fill="#00009c"/><rect x="288" y="295" width="1" height="134" fill="#00009c"/><rect x="298" y="295" width="1" height="134" fill="#00009c"/><rect x="319" y="295" width="1" height="134" fill="#00009c"/><rect x="330" y="295" width="1" height="134" fill="#00009c"/><rect x="340" y="295" width="1" height="134" fill="#00009c"/><rect x="351" y="295" width="1" height="134" fill="#00009c"/><rect x="371" y="295" width="1" height="134" fill="#00009c"/><rect x="382" y="295" width="1" height="134" fill="#00009c"/><rect x="392" y="295" width="1" height="134" fill="#00009c"/><rect x="403" y="295" width="1" height="134" fill="#00009c"/><rect x="424" y="295" width="1" height="134" fill="#00009c"/><rect x="434" y="295" width="1" height="134" fill="#00009c"/><rect x="445" y="295" width="1" height="134" fill="#00009c"/><rect x="455" y="295" width="1" height="134" fill="#00009c"/><rect x="47" y="309" width="419" height="1" fill="#00009c"/><rect x="47" y="335" width="419" height="1" fill="#00009c"/><rect x="47" y="362" width="419" height="1" fill="#00009c"/><rect x="47" y="389" width="419" height="1" fill="#00009c"/><rect x="47" y="415" width="419" height="1" fill="#00009c"/><rect x="100" y="295" width="1" height="134" fill="#0000ff"/><rect x="152" y="295" width="1" height="134" fill="#0000ff"/><rect x="204" y="295" width="1" height="134" fill="#0000ff"/><rect x="257" y="295" width="1" height="134" fill="#0000ff"/><rect x="309" y="295" width="1" height="134" fill="#0000ff"/><rect x="361" y="295" width="1" height="134" fill="#0000ff"/><rect x="413" y="295" width="1" height="134" fill="#0000ff"/><rect x="45" y="295" width="421" height="1" fill="#0000ff"/><rect x="45" y="322" width="421" height="1" fill="#0000ff"/><rect x="45" y="349" width="421" height="1" fill="#0000ff"/><rect x="45" y="375" width="421" height="1" fill="#0000ff"/><rect x="45" y="402" width="421" height="1" fill="#0000ff"/><rect x="45" y="428" width="421" height="1" fill="#0000ff"/><rect x="49" y="421.4" width="1" height="6.7" fill="#44ff00" shape-rendering="crispEdges"/><rect x="50" y="421.4" width="1" height="6.7" fill="#44ff00" shape-rendering="crispEdges"/><rect x="52" y="414.7" width="1" height="13.3" fill="#44ff00" shape-rendering="crispEdges"/><rect x="55" y="421.4" width="1" height="6.7" fill="#44ff00" shape-rendering="crispEdges"/><rect x="56" y="374.8" width="1" height="53.2" fill="#44ff00" shape-rendering="crispEdges"/><rect x="57" y="421.4" width="1" height="6.7" fill="#44ff00" shape-rendering="crispEdges"/><rect x="58" y="421.4" width="1" height="6.7" fill="#44ff00" shape-rendering="crispEdges"/><rect x="60" y="408.1" width="1" height="20.0" fill="#44ff00" shape-rendering="crispEdges"/><rect x="63" y="374.8" width="1" height="53.2" fill="#44ff00" shape-rendering="crispEdges"/><rect x="64" y="374.8" width="1" height="53.2" fill="#44ff00" shape-rendering="crispEdges"/><rect x="65" y="401.4" width="1" height="26.6" fill="#44ff00" shape-rendering="crispEdges"/><rect x="66" y="414.7" width="1" height="13.3" fill="#44ff00" shape-rendering="crispEdges"/><rect x="68" y="381.4" width="1" height="46.6" fill="#44ff00" shape-rendering="crispEdges"/><rect x="69" y="374.8" width="1" height="53.2" fill="#44ff00" shape-rendering="crispEdges"/><rect x="70" y="414.7" width="1" height="13.3" fill="#44ff00" shape-rendering="crispEdges"/><rect x="72" y="394.8" width="1" height="33.2" fill="#44ff00" shape-rendering="crispEdges"/><rect x="73" y="388.1" width="1" height="39.9" fill="#44ff00" shape-rendering="crispEdges"/><rect x="74" y="401.4" width="1" height="26.6" fill="#44ff00" shape-rendering="crispEdges"/><rect x="75" y="401.4" width="1" height="26.6" fill="#44ff00" shape-rendering="crispEdges"/><rect x="76" y="394.8" width="1" height="33.2" fill="#44ff00" shape-rendering="crispEdges"/><rect x="77" y="401.4" width="1" height="26.6" fill="#44ff00" shape-rendering="crispEdges"/><rect x="84" y="421.4" width="1" height="6.7" fill="#44ff00" shape-rendering="crispEdges"/><rect x="88" y="421.4" width="1" height="6.7" fill="#44ff00" shape-rendering="crispEdges"/><rect x="96" y="381.4" width="1" height="46.6" fill="#44ff00" shape-rendering="crispEdges"/><rect x="97" y="421.4" width="1" height="6.7" fill="#44ff00" shape-rendering="crispEdges"/><rect x="98" y="401.4" width="1" height="26.6" fill="#44ff00" shape-rendering="crispEdges"/><rect x="103" y="401.4" width="1" height="26.6" fill="#44ff00" shape-rendering="crispEdges"/><rect x="104" y="401.4" width="1" height="26.6" fill="#44ff00" shape-rendering="crispEdges"/><rect x="105" y="408.1" width="1" height="20.0" fill="#44ff00" shape-rendering="crispEdges"/><rect x="106" y="388.1" width="1" height="39.9" fill="#44ff00" shape-rendering="crispEdges"/><rect x="107" y="408.1" width="1" height="20.0" fill="#44ff00" shape-rendering="crispEdges"/><rect x="111" y="408.1" width="1" height="20.0" fill="#44ff00" shape-rendering="crispEdges"/><rect x="113" y="421.4" width="1" height="6.7" fill="#44ff00" shape-rendering="crispEdges"/><rect x="119" y="408.1" width="1" height="20.0" fill="#44ff00" shape-rendering="crispEdges"/><rect x="123" y="421.4" width="1" height="6.7" fill="#44ff00" shape-rendering="crispEdges"/><rect x="127" y="421.4" width="1" height="6.7" fill="#44ff00" shape-rendering="crispEdges"/><rect x="137" y="401.4" width="1" height="26.6" fill="#44ff00" shape-rendering="crispEdges"/><rect x="139" y="421.4" width="1" height="6.7" fill="#44ff00" shape-rendering="crispEdges"/><rect x="140" y="408.1" width="1" height="20.0" fill="#44ff00" shape-rendering="crispEdges"/><rect x="141" y="388.1" width="1" height="39.9" fill="#44ff00" shape-rendering="crispEdges"/><rect x="142" y="408.1" width="1" height="20.0" fill="#44ff00" shape-rendering="crispEdges"/><rect x="144" y="421.4" width="1" height="6.7" fill="#44ff00" shape-rendering="crispEdges"/><rect x="146" y="421.4" width="1" height="6.7" fill="#44ff00" shape-rendering="crispEdges"/><rect x="151" y="388.1" width="1" height="39.9" fill="#44ff00" shape-rendering="crispEdges"/><rect x="152" y="421.4" width="1" height="6.7" fill="#44ff00" shape-rendering="crispEdges"/><rect x="153" y="421.4" width="1" height="6.7" fill="#44ff00" shape-rendering="crispEdges"/><rect x="156" y="421.4" width="1" height="6.7" fill="#44ff00" shape-rendering="crispEdges"/><rect x="158" y="394.8" width="1" height="33.2" fill="#44ff00" shape-rendering="crispEdges"/><rect x="159" y="421.4" width="1" height="6.7" fill="#44ff00" shape-rendering="crispEdges"/><rect x="162" y="388.1" width="1" height="39.9" fill="#44ff00" shape-rendering="crispEdges"/><rect x="164" y="421.4" width="1" height="6.7" fill="#44ff00" shape-rendering="crispEdges"/><rect x="165" y="408.1" width="1" height="20.0" fill="#44ff00" shape-rendering="crispEdges"/><rect x="166" y="421.4" width="1" height="6.7" fill="#44ff00" shape-rendering="crispEdges"/><rect x="167" y="414.7" width="1" height="13.3" fill="#44ff00" shape-rendering="crispEdges"/><rect x="172" y="421.4" width="1" height="6.7" fill="#44ff00" shape-rendering="crispEdges"/><rect x="174" y="414.7" width="1" height="13.3" fill="#44ff00" shape-rendering="crispEdges"/><rect x="179" y="421.4" width="1" height="6.7" fill="#44ff00" shape-rendering="crispEdges"/><rect x="185" y="414.7" width="1" height="13.3" fill="#44ff00" shape-rendering="crispEdges"/><rect x="188" y="414.7" width="1" height="13.3" fill="#44ff00" shape-rendering="crispEdges"/><rect x="192" y="414.7" width="1" height="13.3" fill="#44ff00" shape-rendering="crispEdges"/><rect x="193" y="414.7" width="1" height="13.3" fill="#44ff00" shape-rendering="crispEdges"/><rect x="194" y="408.1" width="1" height="20.0" fill="#44ff00" shape-rendering="crispEdges"/><rect x="195" y="408.1" width="1" height="20.0" fill="#44ff00" shape-rendering="crispEdges"/><rect x="197" y="408.1" width="1" height="20.0" fill="#44ff00" shape-rendering="crispEdges"/><rect x="198" y="408.1" width="1" height="20.0" fill="#44ff00" shape-rendering="crispEdges"/><rect x="200" y="408.1" width="1" height="20.0" fill="#44ff00" shape-rendering="crispEdges"/><rect x="201" y="408.1" width="1" height="20.0" fill="#44ff00" shape-rendering="crispEdges"/><rect x="202" y="421.4" width="1" height="6.7" fill="#44ff00" shape-rendering="crispEdges"/><rect x="203" y="421.4" width="1" height="6.7" fill="#44ff00" shape-rendering="crispEdges"/><rect x="204" y="421.4" width="1" height="6.7" fill="#44ff00" shape-rendering="crispEdges"/><rect x="205" y="408.1" width="1" height="20.0" fill="#44ff00" shape-rendering="crispEdges"/><rect x="211" y="421.4" width="1" height="6.7" fill="#44ff00" shape-rendering="crispEdges"/><rect x="212" y="421.4" width="1" height="6.7" fill="#44ff00" shape-rendering="crispEdges"/><rect x="213" y="421.4" width="1" height="6.7" fill="#44ff00" shape-rendering="crispEdges"/><rect x="215" y="414.7" width="1" height="13.3" fill="#44ff00" shape-rendering="crispEdges"/><rect x="216" y="414.7" width="1" height="13.3" fill="#44ff00" shape-rendering="crispEdges"/><rect x="217" y="408.1" width="1" height="20.0" fill="#44ff00" shape-rendering="crispEdges"/><rect x="220" y="421.4" width="1" height="6.7" fill="#44ff00" shape-rendering="crispEdges"/><rect x="224" y="414.7" width="1" height="13.3" fill="#44ff00" shape-rendering="crispEdges"/><rect x="225" y="414.7" width="1" height="13.3" fill="#44ff00" shape-rendering="crispEdges"/><rect x="226" y="414.7" width="1" height="13.3" fill="#44ff00" shape-rendering="crispEdges"/><rect x="228" y="408.1" width="1" height="20.0" fill="#44ff00" shape-rendering="crispEdges"/><rect x="231" y="414.7" width="1" height="13.3" fill="#44ff00" shape-rendering="crispEdges"/><rect x="236" y="421.4" width="1" height="6.7" fill="#44ff00" shape-rendering="crispEdges"/><rect x="237" y="421.4" width="1" height="6.7" fill="#44ff00" shape-rendering="crispEdges"/><rect x="238" y="421.4" width="1" height="6.7" fill="#44ff00" shape-rendering="crispEdges"/><rect x="245" y="421.4" width="1" height="6.7" fill="#44ff00" shape-rendering="crispEdges"/><rect x="249" y="401.4" width="1" height="26.6" fill="#44ff00" shape-rendering="crispEdges"/><rect x="252" y="381.4" width="1" height="46.6" fill="#44ff00" shape-rendering="crispEdges"/><rect x="253" y="348.2" width="1" height="79.8" fill="#44ff00" shape-rendering="crispEdges"/><rect x="253" y="348.2" width="1" height="33.2" fill="#d0f020" shape-rendering="crispEdges"/><rect x="254" y="348.2" width="1" height="79.8" fill="#44ff00" shape-rendering="crispEdges"/><rect x="254" y="348.2" width="1" height="33.2" fill="#d0f020" shape-rendering="crispEdges"/><rect x="255" y="381.4" width="1" height="46.6" fill="#44ff00" shape-rendering="crispEdges"/><rect x="256" y="414.7" width="1" height="13.3" fill="#44ff00" shape-rendering="crispEdges"/><rect x="257" y="401.4" width="1" height="26.6" fill="#44ff00" shape-rendering="crispEdges"/><rect x="258" y="414.7" width="1" height="13.3" fill="#44ff00" shape-rendering="crispEdges"/><rect x="259" y="374.8" width="1" height="53.2" fill="#44ff00" shape-rendering="crispEdges"/><rect x="260" y="414.7" width="1" height="13.3" fill="#44ff00" shape-rendering="crispEdges"/><rect x="261" y="408.1" width="1" height="20.0" fill="#44ff00" shape-rendering="crispEdges"/><rect x="262" y="408.1" width="1" height="20.0" fill="#44ff00" shape-rendering="crispEdges"/><rect x="263" y="401.4" width="1" height="26.6" fill="#44ff00" shape-rendering="crispEdges"/><rect x="264" y="414.7" width="1" height="13.3" fill="#44ff00" shape-rendering="crispEdges"/><rect x="265" y="408.1" width="1" height="20.0" fill="#44ff00" shape-rendering="crispEdges"/><rect x="266" y="401.4" width="1" height="26.6" fill="#44ff00" shape-rendering="crispEdges"/><rect x="267" y="414.7" width="1" height="13.3" fill="#44ff00" shape-rendering="crispEdges"/><rect x="268" y="394.8" width="1" height="33.2" fill="#44ff00" shape-rendering="crispEdges"/><rect x="269" y="414.7" width="1" height="13.3" fill="#44ff00" shape-rendering="crispEdges"/><rect x="270" y="394.8" width="1" height="33.2" fill="#44ff00" shape-rendering="crispEdges"/><rect x="271" y="414.7" width="1" height="13.3" fill="#44ff00" shape-rendering="crispEdges"/><rect x="272" y="414.7" width="1" height="13.3" fill="#44ff00" shape-rendering="crispEdges"/><rect x="273" y="408.1" width="1" height="20.0" fill="#44ff00" shape-rendering="crispEdges"/><rect x="274" y="408.1" width="1" height="20.0" fill="#44ff00" shape-rendering="crispEdges"/><rect x="275" y="408.1" width="1" height="20.0" fill="#44ff00" shape-rendering="crispEdges"/><rect x="276" y="408.1" width="1" height="20.0" fill="#44ff00" shape-rendering="crispEdges"/><rect x="277" y="421.4" width="1" height="6.7" fill="#44ff00" shape-rendering="crispEdges"/><rect x="278" y="421.4" width="1" height="6.7" fill="#44ff00" shape-rendering="crispEdges"/><rect x="279" y="421.4" width="1" height="6.7" fill="#44ff00" shape-rendering="crispEdges"/><rect x="280" y="401.4" width="1" height="26.6" fill="#44ff00" shape-rendering="crispEdges"/><rect x="281" y="421.4" width="1" height="6.7" fill="#44ff00" shape-rendering="crispEdges"/><rect x="282" y="421.4" width="1" height="6.7" fill="#44ff00" shape-rendering="crispEdges"/><rect x="283" y="414.7" width="1" height="13.3" fill="#44ff00" shape-rendering="crispEdges"/><rect x="284" y="408.1" width="1" height="20.0" fill="#44ff00" shape-rendering="crispEdges"/><rect x="289" y="408.1" width="1" height="20.0" fill="#44ff00" shape-rendering="crispEdges"/><rect x="290" y="408.1" width="1" height="20.0" fill="#44ff00" shape-rendering="crispEdges"/><rect x="291" y="401.4" width="1" height="26.6" fill="#44ff00" shape-rendering="crispEdges"/><rect x="295" y="408.1" width="1" height="20.0" fill="#44ff00" shape-rendering="crispEdges"/><rect x="297" y="388.1" width="1" height="39.9" fill="#44ff00" shape-rendering="crispEdges"/><rect x="299" y="414.7" width="1" height="13.3" fill="#44ff00" shape-rendering="crispEdges"/><rect x="302" y="401.4" width="1" height="26.6" fill="#44ff00" shape-rendering="crispEdges"/><rect x="303" y="401.4" width="1" height="26.6" fill="#44ff00" shape-rendering="crispEdges"/><rect x="304" y="408.1" width="1" height="20.0" fill="#44ff00" shape-rendering="crispEdges"/><rect x="306" y="414.7" width="1" height="13.3" fill="#44ff00" shape-rendering="crispEdges"/><rect x="308" y="394.8" width="1" height="33.2" fill="#44ff00" shape-rendering="crispEdges"/><rect x="311" y="421.4" width="1" height="6.7" fill="#44ff00" shape-rendering="crispEdges"/><rect x="312" y="408.1" width="1" height="20.0" fill="#44ff00" shape-rendering="crispEdges"/><rect x="313" y="408.1" width="1" height="20.0" fill="#44ff00" shape-rendering="crispEdges"/><rect x="314" y="414.7" width="1" height="13.3" fill="#44ff00" shape-rendering="crispEdges"/><rect x="316" y="401.4" width="1" height="26.6" fill="#44ff00" shape-rendering="crispEdges"/><rect x="317" y="401.4" width="1" height="26.6" fill="#44ff00" shape-rendering="crispEdges"/><rect x="320" y="414.7" width="1" height="13.3" fill="#44ff00" shape-rendering="crispEdges"/><rect x="323" y="408.1" width="1" height="20.0" fill="#44ff00" shape-rendering="crispEdges"/><rect x="329" y="414.7" width="1" height="13.3" fill="#44ff00" shape-rendering="crispEdges"/><rect x="334" y="421.4" width="1" height="6.7" fill="#44ff00" shape-rendering="crispEdges"/><rect x="339" y="408.1" width="1" height="20.0" fill="#44ff00" shape-rendering="crispEdges"/><rect x="340" y="408.1" width="1" height="20.0" fill="#44ff00" shape-rendering="crispEdges"/><rect x="341" y="388.1" width="1" height="39.9" fill="#44ff00" shape-rendering="crispEdges"/><rect x="342" y="408.1" width="1" height="20.0" fill="#44ff00" shape-rendering="crispEdges"/><rect x="343" y="408.1" width="1" height="20.0" fill="#44ff00" shape-rendering="crispEdges"/><rect x="344" y="388.1" width="1" height="39.9" fill="#44ff00" shape-rendering="crispEdges"/><rect x="353" y="394.8" width="1" height="33.2" fill="#44ff00" shape-rendering="crispEdges"/><rect x="354" y="414.7" width="1" height="13.3" fill="#44ff00" shape-rendering="crispEdges"/><rect x="357" y="414.7" width="1" height="13.3" fill="#44ff00" shape-rendering="crispEdges"/><rect x="361" y="401.4" width="1" height="26.6" fill="#44ff00" shape-rendering="crispEdges"/><rect x="362" y="394.8" width="1" height="33.2" fill="#44ff00" shape-rendering="crispEdges"/><rect x="364" y="414.7" width="1" height="13.3" fill="#44ff00" shape-rendering="crispEdges"/><rect x="367" y="408.1" width="1" height="20.0" fill="#44ff00" shape-rendering="crispEdges"/><rect x="370" y="421.4" width="1" height="6.7" fill="#44ff00" shape-rendering="crispEdges"/><rect x="371" y="421.4" width="1" height="6.7" fill="#44ff00" shape-rendering="crispEdges"/><rect x="372" y="421.4" width="1" height="6.7" fill="#44ff00" shape-rendering="crispEdges"/><rect x="374" y="394.8" width="1" height="33.2" fill="#44ff00" shape-rendering="crispEdges"/><rect x="377" y="394.8" width="1" height="33.2" fill="#44ff00" shape-rendering="crispEdges"/><rect x="379" y="421.4" width="1" height="6.7" fill="#44ff00" shape-rendering="crispEdges"/><rect x="382" y="394.8" width="1" height="33.2" fill="#44ff00" shape-rendering="crispEdges"/><rect x="384" y="408.1" width="1" height="20.0" fill="#44ff00" shape-rendering="crispEdges"/><rect x="385" y="388.1" width="1" height="39.9" fill="#44ff00" shape-rendering="crispEdges"/><rect x="386" y="414.7" width="1" height="13.3" fill="#44ff00" shape-rendering="crispEdges"/><rect x="389" y="401.4" width="1" height="26.6" fill="#44ff00" shape-rendering="crispEdges"/><rect x="392" y="408.1" width="1" height="20.0" fill="#44ff00" shape-rendering="crispEdges"/><rect x="393" y="408.1" width="1" height="20.0" fill="#44ff00" shape-rendering="crispEdges"/><rect x="394" y="408.1" width="1" height="20.0" fill="#44ff00" shape-rendering="crispEdges"/><rect x="395" y="408.1" width="1" height="20.0" fill="#44ff00" shape-rendering="crispEdges"/><rect x="397" y="401.4" width="1" height="26.6" fill="#44ff00" shape-rendering="crispEdges"/><rect x="398" y="401.4" width="1" height="26.6" fill="#44ff00" shape-rendering="crispEdges"/><rect x="399" y="381.4" width="1" height="46.6" fill="#44ff00" shape-rendering="crispEdges"/><rect x="401" y="394.8" width="1" height="33.2" fill="#44ff00" shape-rendering="crispEdges"/><rect x="402" y="394.8" width="1" height="33.2" fill="#44ff00" shape-rendering="crispEdges"/><rect x="403" y="361.5" width="1" height="66.5" fill="#44ff00" shape-rendering="crispEdges"/><rect x="404" y="394.8" width="1" height="33.2" fill="#44ff00" shape-rendering="crispEdges"/><rect x="405" y="394.8" width="1" height="33.2" fill="#44ff00" shape-rendering="crispEdges"/><rect x="406" y="381.4" width="1" height="46.6" fill="#44ff00" shape-rendering="crispEdges"/><rect x="407" y="394.8" width="1" height="33.2" fill="#44ff00" shape-rendering="crispEdges"/><rect x="408" y="394.8" width="1" height="33.2" fill="#44ff00" shape-rendering="crispEdges"/><rect x="409" y="394.8" width="1" height="33.2" fill="#44ff00" shape-rendering="crispEdges"/><rect x="411" y="401.4" width="1" height="26.6" fill="#44ff00" shape-rendering="crispEdges"/><rect x="413" y="381.4" width="1" height="46.6" fill="#44ff00" shape-rendering="crispEdges"/><rect x="414" y="408.1" width="1" height="20.0" fill="#44ff00" shape-rendering="crispEdges"/><rect x="415" y="408.1" width="1" height="20.0" fill="#44ff00" shape-rendering="crispEdges"/><rect x="416" y="408.1" width="1" height="20.0" fill="#44ff00" shape-rendering="crispEdges"/><rect x="417" y="408.1" width="1" height="20.0" fill="#44ff00" shape-rendering="crispEdges"/><rect x="421" y="421.4" width="1" height="6.7" fill="#44ff00" shape-rendering="crispEdges"/><rect x="422" y="414.7" width="1" height="13.3" fill="#44ff00" shape-rendering="crispEdges"/><rect x="424" y="381.4" width="1" height="46.6" fill="#44ff00" shape-rendering="crispEdges"/><rect x="426" y="401.4" width="1" height="26.6" fill="#44ff00" shape-rendering="crispEdges"/><rect x="427" y="401.4" width="1" height="26.6" fill="#44ff00" shape-rendering="crispEdges"/><rect x="431" y="421.4" width="1" height="6.7" fill="#44ff00" shape-rendering="crispEdges"/><rect x="432" y="388.1" width="1" height="39.9" fill="#44ff00" shape-rendering="crispEdges"/><rect x="433" y="421.4" width="1" height="6.7" fill="#44ff00" shape-rendering="crispEdges"/><rect x="434" y="381.4" width="1" height="46.6" fill="#44ff00" shape-rendering="crispEdges"/><rect x="436" y="394.8" width="1" height="33.2" fill="#44ff00" shape-rendering="crispEdges"/><rect x="437" y="401.4" width="1" height="26.6" fill="#44ff00" shape-rendering="crispEdges"/><rect x="440" y="374.8" width="1" height="53.2" fill="#44ff00" shape-rendering="crispEdges"/><rect x="444" y="388.1" width="1" height="39.9" fill="#44ff00" shape-rendering="crispEdges"/><rect x="446" y="394.8" width="1" height="33.2" fill="#44ff00" shape-rendering="crispEdges"/><rect x="447" y="368.1" width="1" height="59.9" fill="#44ff00" shape-rendering="crispEdges"/><rect x="448" y="394.8" width="1" height="33.2" fill="#44ff00" shape-rendering="crispEdges"/><rect x="449" y="394.8" width="1" height="33.2" fill="#44ff00" shape-rendering="crispEdges"/><rect x="454" y="388.1" width="1" height="39.9" fill="#44ff00" shape-rendering="crispEdges"/><rect x="455" y="388.1" width="1" height="39.9" fill="#44ff00" shape-rendering="crispEdges"/><rect x="455" y="375" width="1" height="53" fill="#60ff20"/><path d="M48,363.3L49,364.7L50,366.6L51,365.9L52,365.5L53,367.1L54,368.7L55,367.1L56,368.0L57,369.4L58,368.6L59,367.0L60,372.1L61,371.9L62,366.9L63,369.5L64,370.2L65,371.0L66,370.8L67,369.8L68,369.0L69,370.6L70,372.0L71,369.5L72,369.7L73,371.1L74,368.9L75,371.2L76,370.9L77,372.0L78,370.5L79,370.2L80,370.8L81,371.2L82,370.4L83,371.2L84,372.1L85,372.6L86,373.2L87,370.0L88,370.5L89,367.8L90,373.3L91,370.0L92,370.8L93,371.4L94,369.0L95,371.3L96,370.6L97,368.3L98,370.9L99,372.0L100,368.2L101,371.5L102,370.7L103,371.0L104,370.9L105,371.9L106,370.0L107,371.3L108,369.7L109,371.1L110,369.1L111,369.9L112,372.2L113,370.6L114,369.8L115,368.5L116,368.9L117,370.1L118,371.0L119,370.3L120,370.4L121,369.6L122,371.3L123,369.1L124,368.9L125,370.6L126,369.6L127,369.1L128,368.7L129,369.1L130,370.1L131,369.7L132,367.8L133,369.8L134,369.4L135,367.9L136,370.1L137,368.7L138,368.6L139,370.0L140,370.6L141,368.1L142,369.4L143,367.8L144,371.7L145,368.2L146,370.2L147,367.9L148,369.7L149,371.4L150,365.4L151,368.0L152,369.1L153,368.3L154,367.6L155,371.0L156,368.4L157,366.2L158,369.3L159,366.0L160,369.6L161,367.4L162,368.2L163,369.6L164,368.1L165,366.1L166,365.7L167,369.3L168,368.7L169,366.7L170,368.7L171,368.2L172,368.4L173,364.7L174,367.1L175,368.5L176,368.3L177,368.4L178,364.2L179,367.4L180,367.8L181,370.3L182,365.9L183,366.6L184,367.0L185,368.1L186,366.3L187,368.3L188,365.8L189,367.1L190,366.0L191,366.9L192,365.7L193,364.6L194,367.9L195,366.9L196,365.7L197,366.6L198,367.6L199,365.1L200,366.1L201,366.9L202,366.8L203,365.7L204,363.4L205,367.6L206,366.4L207,365.9L208,365.5L209,366.1L210,365.2L211,364.4L212,364.7L213,364.9L214,364.8L215,364.1L216,366.2L217,363.8L218,366.2L219,364.0L220,365.7L221,366.9L222,365.4L223,364.2L224,365.1L225,365.2L226,362.8L227,364.1L228,365.1L229,364.2L230,364.8L231,365.6L232,365.6L233,365.7L234,365.3L235,364.1L236,364.4L237,364.1L238,364.0L239,364.1L240,362.1L241,363.8L242,364.1L243,362.9L244,364.0L245,364.6L246,363.6L247,366.2L248,360.1L249,362.9L250,360.7L251,361.7L252,361.3L253,354.6L254,357.7L255,357.9L256,356.6L257,357.8L258,354.3L259,358.3L260,357.8L261,357.4L262,356.7L263,358.3L264,357.0L265,357.9L266,357.1L267,355.0L268,357.8L269,358.2L270,358.9L271,356.9L272,358.0L273,358.9L274,358.3L275,359.7L276,360.7L277,357.1L278,355.9L279,359.4L280,360.3L281,359.6L282,359.5L283,357.7L284,357.6L285,359.7L286,357.5L287,356.4L288,357.4L289,361.8L290,361.2L291,357.9L292,357.9L293,359.2L294,358.0L295,360.6L296,358.9L297,357.7L298,360.7L299,358.4L300,359.4L301,359.1L302,358.8L303,359.6L304,358.4L305,357.0L306,356.6L307,357.8L308,358.5L309,359.4L310,359.6L311,360.2L312,359.7L313,358.6L314,358.7L315,357.0L316,359.4L317,360.3L318,360.4L319,359.6L320,359.5L321,360.9L322,359.8L323,360.7L324,360.6L325,360.1L326,361.5L327,359.2L328,359.5L329,359.0L330,359.0L331,362.0L332,362.2L333,360.1L334,360.8L335,361.6L336,361.2L337,361.7L338,358.6L339,359.4L340,360.8L341,362.1L342,360.4L343,359.3L344,359.9L345,359.5L346,359.3L347,362.3L348,359.7L349,360.5L350,363.2L351,362.0L352,361.0L353,359.8L354,361.1L355,362.6L356,361.4L357,362.2L358,360.8L359,361.3L360,360.4L361,361.3L362,362.4L363,359.0L364,360.7L365,361.1L366,360.1L367,360.5L368,361.8L369,363.4L370,361.7L371,361.3L372,359.0L373,363.4L374,361.1L375,361.0L376,359.6L377,361.0L378,359.7L379,361.2L380,361.7L381,361.2L382,361.5L383,360.1L384,363.0L385,360.4L386,358.9L387,361.0L388,360.3L389,360.0L390,360.9L391,361.7L392,359.9L393,361.2L394,363.2L395,362.3L396,361.2L397,361.6L398,361.3L399,361.4L400,362.4L401,361.4L402,358.6L403,361.6L404,360.6L405,362.6L406,361.0L407,362.0L408,364.6L409,360.6L410,360.6L411,360.3L412,359.1L413,359.8L414,362.7L415,361.5L416,360.0L417,360.5L418,363.2L419,361.5L420,362.0L421,363.0L422,364.3L423,365.1L424,364.0L425,362.9L426,363.0L427,365.1L428,364.7L429,362.6L430,363.6L431,363.5L432,363.3L433,362.7L434,361.7L435,362.8L436,361.7L437,365.2L438,364.5L439,362.4L440,365.7L441,365.2L442,361.8L443,366.6L444,365.4L445,367.1L446,363.1L447,365.4L448,365.3L449,365.2L450,365.2L451,366.7L452,363.8L453,364.4L454,364.6L455,366.0L456,366.2" fill="none" stroke="#ff00ff" stroke-width="2" stroke-linejoin="miter"/><rect x="456" y="295" width="1" height="134" fill="#e4e4f4"/></svg>
<span class="t" id="t0" style="left:23.4px;top:7px;font-size:11px;line-height:13px;color:#fff;font-weight:bold;transform:scaleX(1.0355);">Nero CD-DVD Speed 4.51.1</span>
<span class="t" id="t1" style="left:10px;top:26px;font-size:11px;line-height:13px;color:#000;transform:scaleX(0.8458);">File</span>
<span class="t" id="t2" style="left:38px;top:26px;font-size:11px;line-height:13px;color:#000;transform:scaleX(0.9718);">Run Test</span>
<span class="t" id="t3" style="left:93px;top:26px;font-size:11px;line-height:13px;color:#000;transform:scaleX(0.9732);">Extra</span>
<span class="t" id="t4" style="left:131px;top:26px;font-size:11px;line-height:13px;color:#000;transform:scaleX(0.8840);">Help</span>
<span class="t" id="t5" style="left:179px;top:57px;font-size:12px;line-height:14px;color:#000;transform:scaleX(0.8647);">[1:0]</span>
<span class="t" id="t6" style="left:208.6px;top:57px;font-size:12px;line-height:14px;color:#000;transform:scaleX(0.8943);">BENQ DVD DD DW1640 BSLB</span>
<span class="t" id="t7" style="left:496.8px;top:56px;font-size:12px;line-height:14px;color:#000;transform:scaleX(0.8681);">Start</span>
<span class="t" id="t8" style="left:580.6px;top:56px;font-size:12px;line-height:14px;color:#000;transform:scaleX(0.8593);">Exit</span>
<span class="t" id="t9" style="left:19px;top:98px;font-size:12px;line-height:14px;color:#000;transform:scaleX(0.8649);">Benchmark</span>
<span class="t" id="t10" style="left:84.3px;top:98px;font-size:12px;line-height:14px;color:#000;transform:scaleX(0.8646);">Create Disc</span>
<span class="t" id="t11" style="left:151.3px;top:98px;font-size:12px;line-height:14px;color:#000;transform:scaleX(0.8932);">Disc Info</span>
<span class="t" id="t12" style="left:205.4px;top:96px;font-size:12px;line-height:14px;color:#000;transform:scaleX(0.8685);">Disc Quality</span>
<span class="t" id="t13" style="left:273.6px;top:98px;font-size:12px;line-height:14px;color:#000;transform:scaleX(0.9055);">ScanDisc</span>
<span class="t" id="t14" style="left:500.4px;top:121px;font-size:12px;line-height:14px;color:#000;transform:scaleX(0.8823);">Disc info</span>
<span class="t" id="t15" style="left:500px;top:135px;font-size:12px;line-height:14px;color:#000;transform:scaleX(0.8754);">Type:</span>
<span class="t" id="t16" style="left:545.3px;top:135px;font-size:12px;line-height:14px;color:#000080;transform:scaleX(0.8997);">DVD+R DL</span>
<span class="t" id="t17" style="left:500px;top:152.5px;font-size:12px;line-height:14px;color:#000;transform:scaleX(0.8473);">ID:</span>
<span class="t" id="t18" style="left:545.3px;top:152.5px;font-size:12px;line-height:14px;color:#000080;transform:scaleX(0.8849);">RITEK D01</span>
<span class="t" id="t19" style="left:500px;top:170px;font-size:12px;line-height:14px;color:#000;transform:scaleX(0.8715);">Date:</span>
<span class="t" id="t20" style="left:545.3px;top:170px;font-size:12px;line-height:14px;color:#000080;transform:scaleX(0.9005);">30 Aug 2006</span>
<span class="t" id="t21" style="left:500px;top:187.5px;font-size:12px;line-height:14px;color:#000;transform:scaleX(0.8562);">Label:</span>
<span class="t" id="t22" style="left:545.3px;top:187.5px;font-size:12px;line-height:14px;color:#000080;transform:scaleX(0.9036);">New</span>
<span class="t" id="t23" style="left:500.4px;top:212px;font-size:12px;line-height:14px;color:#000;transform:scaleX(0.8810);">Settings</span>
<span class="t" id="t24" style="left:500px;top:226px;font-size:12px;line-height:14px;color:#000;transform:scaleX(0.8674);">Speed:</span>
<span class="t" id="t25" style="left:504.2px;top:246px;font-size:12px;line-height:14px;color:#000;transform:scaleX(0.8881);">8 X</span>
<span class="t" id="t26" style="left:502.8px;top:272px;font-size:12px;line-height:14px;color:#000;transform:scaleX(0.8087);">Start:</span>
<span class="t" id="t27" style="left:557.7px;top:271px;font-size:12px;line-height:14px;color:#000;transform:scaleX(0.8599);">0000 MB</span>
<span class="t" id="t28" style="left:502.8px;top:295px;font-size:12px;line-height:14px;color:#000;transform:scaleX(0.8304);">End:</span>
<span class="t" id="t29" style="left:557.7px;top:294px;font-size:12px;line-height:14px;color:#000;transform:scaleX(0.8599);">8000 MB</span>
<span class="t" id="t30" style="left:520.3px;top:316px;font-size:12px;line-height:14px;color:#000;transform:scaleX(0.9047);">Quick scan</span>
<span class="t" id="t31" style="left:520.3px;top:337px;font-size:12px;line-height:14px;color:#000;transform:scaleX(0.8925);">Show C1/PIE</span>
<span class="t" id="t32" style="left:520.3px;top:353px;font-size:12px;line-height:14px;color:#000;transform:scaleX(0.8939);">Show C2/PIF</span>
<span class="t" id="t33" style="left:520.3px;top:369px;font-size:12px;line-height:14px;color:#000;transform:scaleX(0.8692);">Show jitter</span>
<span class="t" id="t34" style="left:520.3px;top:385.5px;font-size:12px;line-height:14px;color:#000;transform:scaleX(0.8854);">Show read speed</span>
<span class="t" id="t35" style="left:520.3px;top:401.5px;font-size:12px;line-height:14px;color:#808080;text-shadow:1px 1px 0 #fff;transform:scaleX(0.8942);">Show write speed</span>
<span class="t" id="t36" style="left:502.3px;top:434px;font-size:12px;line-height:14px;color:#000;transform:scaleX(0.8629);">Quality score:</span>
<span class="t" id="t37" style="left:608.5px;top:434px;font-size:12px;line-height:14px;color:#000080;transform:scaleX(0.8982);">93</span>
<span class="t" id="t38" style="left:502.3px;top:468px;font-size:12px;line-height:14px;color:#000;transform:scaleX(0.8372);">Progress:</span>
<span class="t" id="t39" style="left:593px;top:468px;font-size:12px;line-height:14px;color:#000080;transform:scaleX(0.8287);">100 %</span>
<span class="t" id="t40" style="left:502.3px;top:484px;font-size:12px;line-height:14px;color:#000;transform:scaleX(0.8407);">Position:</span>
<span class="t" id="t41" style="left:579.2px;top:484px;font-size:12px;line-height:14px;color:#000080;transform:scaleX(0.8744);">7999 MB</span>
<span class="t" id="t42" style="left:502.3px;top:499px;font-size:12px;line-height:14px;color:#000;transform:scaleX(0.8595);">Speed:</span>
<span class="t" id="t43" style="left:591px;top:499px;font-size:12px;line-height:14px;color:#000080;transform:scaleX(0.8702);">3.31 X</span>
<span class="t" id="t44" style="left:34.7px;top:453px;font-size:12px;line-height:14px;color:#000;transform:scaleX(0.8512);">PI Errors</span>
<span class="t" id="t45" style="left:22.2px;top:468.5px;font-size:12px;line-height:14px;color:#000;transform:scaleX(0.8784);">Average:</span>
<span class="t" id="t46" style="left:123.5px;top:468.5px;font-size:12px;line-height:14px;color:#000080;transform:scaleX(0.9157);">19.49</span>
<span class="t" id="t47" style="left:22.2px;top:483.5px;font-size:12px;line-height:14px;color:#000;transform:scaleX(0.8366);">Maximum:</span>
<span class="t" id="t48" style="left:133px;top:483.5px;font-size:12px;line-height:14px;color:#000080;transform:scaleX(0.8986);">133</span>
<span class="t" id="t49" style="left:22.2px;top:498.5px;font-size:12px;line-height:14px;color:#000;transform:scaleX(0.8993);">Total:</span>
<span class="t" id="t50" style="left:114.2px;top:498.5px;font-size:12px;line-height:14px;color:#000080;transform:scaleX(0.9189);">502273</span>
<span class="t" id="t51" style="left:192.9px;top:453px;font-size:12px;line-height:14px;color:#000;transform:scaleX(0.8560);">PI Failures</span>
<span class="t" id="t52" style="left:181px;top:468.5px;font-size:12px;line-height:14px;color:#000;transform:scaleX(0.8889);">Average:</span>
<span class="t" id="t53" style="left:288.5px;top:468.5px;font-size:12px;line-height:14px;color:#000080;transform:scaleX(0.9204);">0.38</span>
<span class="t" id="t54" style="left:181px;top:483.5px;font-size:12px;line-height:14px;color:#000;transform:scaleX(0.8492);">Maximum:</span>
<span class="t" id="t55" style="left:297.5px;top:483.5px;font-size:12px;line-height:14px;color:#000080;transform:scaleX(0.9357);">12</span>
<span class="t" id="t56" style="left:181px;top:498.5px;font-size:12px;line-height:14px;color:#000;transform:scaleX(0.9237);">Total:</span>
<span class="t" id="t57" style="left:285.5px;top:498.5px;font-size:12px;line-height:14px;color:#000080;transform:scaleX(0.9175);">7295</span>
<span class="t" id="t58" style="left:352px;top:453px;font-size:12px;line-height:14px;color:#000;transform:scaleX(0.8341);">Jitter</span>
<span class="t" id="t59" style="left:340px;top:468.5px;font-size:12px;line-height:14px;color:#000;transform:scaleX(0.8784);">Average:</span>
<span class="t" id="t60" style="left:436.7px;top:468.5px;font-size:12px;line-height:14px;color:#000080;transform:scaleX(0.8512);">9.39 %</span>
<span class="t" id="t61" style="left:340px;top:483.5px;font-size:12px;line-height:14px;color:#000;transform:scaleX(0.8438);">Maximum:</span>
<span class="t" id="t62" style="left:436px;top:483.5px;font-size:12px;line-height:14px;color:#000080;transform:scaleX(0.8912);">11.4 %</span>
<span class="t" id="t63" style="left:341px;top:502px;font-size:12px;line-height:14px;color:#000;transform:scaleX(0.8373);">PO failures:</span>
<span class="t" id="t64" style="left:463px;top:502px;font-size:12px;line-height:14px;color:#000080;transform:scaleX(0.8224);">0</span>
<span class="t" id="t65" style="left:24px;top:125px;font-size:12px;line-height:14px;color:#000;transform:scaleX(0.8487);">200</span>
<span class="t" id="t66" style="left:24px;top:152px;font-size:12px;line-height:14px;color:#000;transform:scaleX(0.8487);">160</span>
<span class="t" id="t67" style="left:24px;top:178px;font-size:12px;line-height:14px;color:#000;transform:scaleX(0.8487);">120</span>
<span class="t" id="t68" style="left:30px;top:205px;font-size:12px;line-height:14px;color:#000;transform:scaleX(0.8234);">80</span>
<span class="t" id="t69" style="left:30px;top:232px;font-size:12px;line-height:14px;color:#000;transform:scaleX(0.8234);">40</span>
<span class="t" id="t70" style="left:471px;top:125px;font-size:12px;line-height:14px;color:#000;transform:scaleX(0.8234);">16</span>
<span class="t" id="t71" style="left:471px;top:142px;font-size:12px;line-height:14px;color:#000;transform:scaleX(0.8234);">14</span>
<span class="t" id="t72" style="left:471px;top:159px;font-size:12px;line-height:14px;color:#000;transform:scaleX(0.8234);">12</span>
<span class="t" id="t73" style="left:471px;top:175px;font-size:12px;line-height:14px;color:#000;transform:scaleX(0.8234);">10</span>
<span class="t" id="t74" style="left:471px;top:192px;font-size:12px;line-height:14px;color:#000;transform:scaleX(0.7477);">8</span>
<span class="t" id="t75" style="left:471px;top:209px;font-size:12px;line-height:14px;color:#000;transform:scaleX(0.7477);">6</span>
<span class="t" id="t76" style="left:471px;top:225px;font-size:12px;line-height:14px;color:#000;transform:scaleX(0.7477);">4</span>
<span class="t" id="t77" style="left:471px;top:242px;font-size:12px;line-height:14px;color:#000;transform:scaleX(0.7477);">2</span>
<span class="t" id="t78" style="left:30px;top:287px;font-size:12px;line-height:14px;color:#000;transform:scaleX(0.8234);">20</span>
<span class="t" id="t79" style="left:471px;top:287px;font-size:12px;line-height:14px;color:#000;transform:scaleX(0.8234);">20</span>
<span class="t" id="t80" style="left:30px;top:314px;font-size:12px;line-height:14px;color:#000;transform:scaleX(0.8234);">16</span>
<span class="t" id="t81" style="left:471px;top:314px;font-size:12px;line-height:14px;color:#000;transform:scaleX(0.8234);">16</span>
<span class="t" id="t82" style="left:30px;top:340px;font-size:12px;line-height:14px;color:#000;transform:scaleX(0.8234);">12</span>
<span class="t" id="t83" style="left:471px;top:340px;font-size:12px;line-height:14px;color:#000;transform:scaleX(0.8234);">12</span>
<span class="t" id="t84" style="left:36px;top:367px;font-size:12px;line-height:14px;color:#000;transform:scaleX(0.7477);">8</span>
<span class="t" id="t85" style="left:471px;top:367px;font-size:12px;line-height:14px;color:#000;transform:scaleX(0.7477);">8</span>
<span class="t" id="t86" style="left:36px;top:393px;font-size:12px;line-height:14px;color:#000;transform:scaleX(0.7477);">4</span>
<span class="t" id="t87" style="left:471px;top:393px;font-size:12px;line-height:14px;color:#000;transform:scaleX(0.7477);">4</span>
<span class="t" id="t88" style="left:43.2px;top:269px;font-size:12px;line-height:14px;color:#000;transform:scaleX(0.8150);">0.0</span>
<span class="t" id="t89" style="left:95.4px;top:269px;font-size:12px;line-height:14px;color:#000;transform:scaleX(0.8150);">1.0</span>
<span class="t" id="t90" style="left:147.6px;top:269px;font-size:12px;line-height:14px;color:#000;transform:scaleX(0.8150);">2.0</span>
<span class="t" id="t91" style="left:199.8px;top:269px;font-size:12px;line-height:14px;color:#000;transform:scaleX(0.8150);">3.0</span>
<span class="t" id="t92" style="left:252.0px;top:269px;font-size:12px;line-height:14px;color:#000;transform:scaleX(0.8150);">4.0</span>
<span class="t" id="t93" style="left:304.2px;top:269px;font-size:12px;line-height:14px;color:#000;transform:scaleX(0.8150);">5.0</span>
<span class="t" id="t94" style="left:356.40000000000003px;top:269px;font-size:12px;line-height:14px;color:#000;transform:scaleX(0.8150);">6.0</span>
<span class="t" id="t95" style="left:408.6px;top:269px;font-size:12px;line-height:14px;color:#000;transform:scaleX(0.8150);">7.0</span>
<span class="t" id="t96" style="left:460.8px;top:269px;font-size:12px;line-height:14px;color:#000;transform:scaleX(0.8150);">8.0</span>
<span class="t" id="t97" style="left:43.2px;top:431px;font-size:12px;line-height:14px;color:#000;transform:scaleX(0.8150);">0.0</span>
<span class="t" id="t98" style="left:95.4px;top:431px;font-size:12px;line-height:14px;color:#000;transform:scaleX(0.8150);">1.0</span>
<span class="t" id="t99" style="left:147.6px;top:431px;font-size:12px;line-height:14px;color:#000;transform:scaleX(0.8150);">2.0</span>
<span class="t" id="t100" style="left:199.8px;top:431px;font-size:12px;line-height:14px;color:#000;transform:scaleX(0.8150);">3.0</span>
<span class="t" id="t101" style="left:252.0px;top:431px;font-size:12px;line-height:14px;color:#000;transform:scaleX(0.8150);">4.0</span>
<span class="t" id="t102" style="left:304.2px;top:431px;font-size:12px;line-height:14px;color:#000;transform:scaleX(0.8150);">5.0</span>
<span class="t" id="t103" style="left:356.40000000000003px;top:431px;font-size:12px;line-height:14px;color:#000;transform:scaleX(0.8150);">6.0</span>
<span class="t" id="t104" style="left:408.6px;top:431px;font-size:12px;line-height:14px;color:#000;transform:scaleX(0.8150);">7.0</span>
<span class="t" id="t105" style="left:460.8px;top:431px;font-size:12px;line-height:14px;color:#000;transform:scaleX(0.8150);">8.0</span>
</body></html>
